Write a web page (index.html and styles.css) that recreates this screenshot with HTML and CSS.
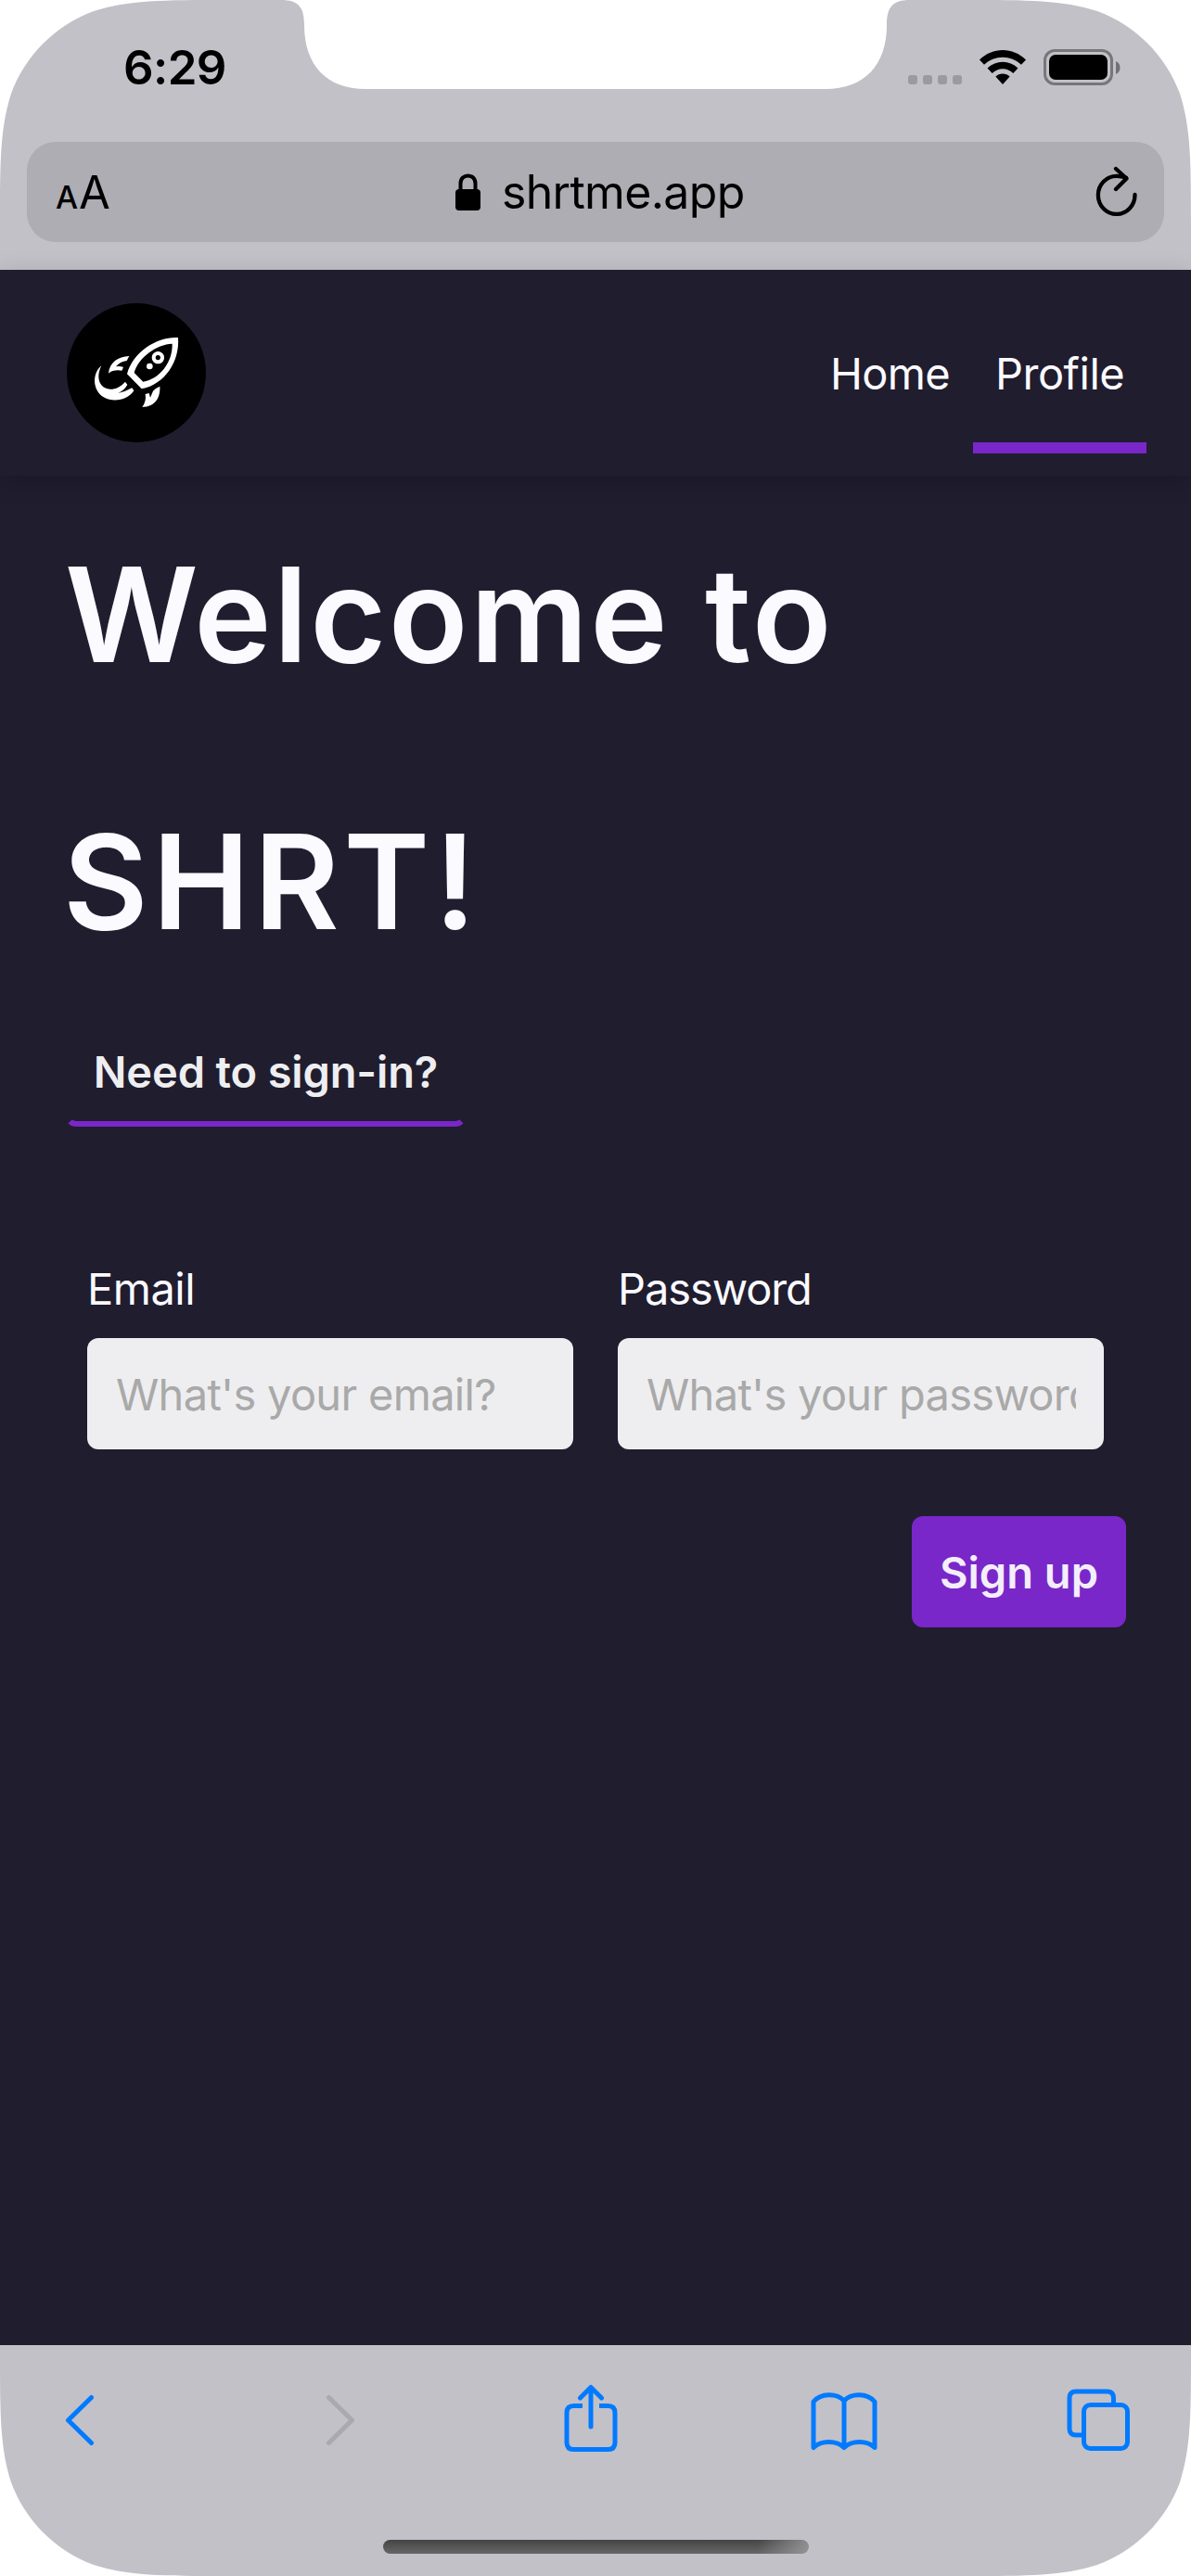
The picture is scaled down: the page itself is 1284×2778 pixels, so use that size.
FILE: index.html
```html
<!DOCTYPE html>
<html lang="en">
<head>
<meta charset="utf-8">
<title>SHRT</title>
<link rel="stylesheet" href="styles.css">
</head>
<body>
<div class="screen">
  <div class="chrome-top">
    <div class="status">
      <span class="time">6:29</span>
      <div class="indicators">
        <div class="dots"><i></i><i></i><i></i><i></i></div>
        <svg class="wifi" width="50" height="38" viewBox="0 0 50 38">
          <path d="M0 10.500C14-3.500 36-3.500 50 10.500L45 15.800C34 5 16 5 5 15.800Z"/>
          <path d="M8.500 19.500C18 10.500 32 10.500 41.500 19.500L36.300 25C30 18.700 20 18.700 13.700 25Z"/>
          <path d="M17.300 28.500C21.500 24.500 28.500 24.500 32.700 28.500L25 37Z"/>
        </svg>
        <div class="battery"><div class="cell"><b></b></div><svg width="5" height="14" viewBox="0 0 5 14"><path d="M0 0Q4.500 2 4.500 7T0 14Z"/></svg></div>
      </div>
    </div>
    <div class="urlbar">
      <div class="reader"><span class="a-small">A</span><span class="a-big">A</span></div>
      <div class="address">
        <svg width="28" height="40" viewBox="0 0 28 40"><rect x="0" y="17" width="27" height="23" rx="4"/><path d="M5.500 18V11C5.500-.5 21.500-.5 21.500 11V18" fill="none" stroke="#000" stroke-width="4"/></svg>
        <span>shrtme.app</span>
      </div>
      <svg class="reload" width="46" height="56" viewBox="0 0 46 56"><path d="M33 12.500Q28 10.900 23 10.900A19.800 20.500 0 1 0 42.500 31M22 3L33.500 13.500L22 25" fill="none" stroke="#000" stroke-width="4.300" stroke-linecap="round" stroke-linejoin="round"/></svg>
    </div>
  </div>

  <div class="page">
    <header class="header">
      <svg class="logo" width="150" height="150" viewBox="96 81 450 450">
        <circle cx="321" cy="306" r="225" fill="#000"/>
        <g fill="#fff" fill-rule="evenodd">
          <path d="M456 192C392 188 310 236 291 310L338 358C412 344 462 270 456 192ZM437 212C386 214 328 256 314 306L343 335C396 326 439 272 437 212Z"/>
          <path d="M391 237a20 20 0 1 0 .1 0ZM391 249a8 8 0 1 1-.1 0Z"/>
          <circle cx="364" cy="285" r="10"/>
          <path d="M298 252C262 253 234 273 231 308Q247 295 274 299L279 288Q267 283 255 286Q268 270 290 267Z"/>
          <path d="M397 350Q382 356 375 365L366 386L362 372L350 375Q354 398 340 417C384 415 399 385 397 350Z"/>
          <path d="M208 283C178 308 178 362 215 385C250 405 295 392 313 364L307 355Q288 366 262 372Q281 364 292 345L285 335C265 358 235 367 214 352C194 335 196 307 208 283Z"/>
        </g>
      </svg>
      <nav class="nav">
        <a class="link home">Home</a>
        <a class="link profile active">Profile</a>
      </nav>
    </header>
    <main class="main">
      <h1 class="title"><span class="greeting">Welcome to</span><br>SHRT!</h1>
      <button class="switch"><span>Need to sign-in?</span></button>
      <form class="form">
        <label class="field"><span class="label email">Email</span><span class="input"><span class="hint">What's your email?</span></span></label>
        <label class="field"><span class="label password">Password</span><span class="input"><span class="hint">What's your password?</span></span></label>
      </form>
      <div class="actions"><button class="submit" type="button"><span>Sign up</span></button></div>
    </main>
  </div>

  <div class="chrome-bottom">
    <div class="toolbar">
      <svg class="back" width="32" height="56" viewBox="0 0 32 56"><path d="M28.500 3.500L3.500 28L28.500 52.500"/></svg>
      <svg class="forward" width="32" height="56" viewBox="0 0 32 56"><path d="M3.500 3.500L28.500 28L3.500 52.500"/></svg>
      <svg class="share" width="58" height="74" viewBox="0 0 58 74"><path d="M20 23.500H10.500Q3 23.500 3 31V63Q3 70.500 10.500 70.500H47.500Q55 70.500 55 63V31Q55 23.500 47.500 23.500H38"/><path d="M29 46V4M17.500 15L29 3.500L40.500 15" stroke-linecap="round"/></svg>
      <svg class="book" width="72" height="64" viewBox="0 0 72 64"><path d="M3 60.500V11C11 1.500 28 1.500 36 10C44 1.500 61 1.500 69 11V60.500C61 52.500 44 52.500 36 60.500C28 52.500 11 52.500 3 60.500ZM36 10V60.500"/></svg>
      <svg class="tabs" width="68" height="68" viewBox="0 0 68 68"><path d="M50.500 17V10Q50.500 3 43.500 3H10Q3 3 3 10V43Q3 50 10 50H17"/><rect x="18.500" y="17.500" width="47" height="47" rx="7"/></svg>
    </div>
    <div class="grabber"></div>
  </div>
</div>
</body>
</html>
```
FILE: styles.css
```css
* { box-sizing: border-box; }

body {
  margin: 0;
  background: #fff;
  font-family: Inter, "Liberation Sans", sans-serif;
}

svg { display: block; flex: none; }

/* Display outline: continuous corners plus the sensor notch */
.screen {
  width: 1284px;
  height: 2778px;
  display: flex;
  flex-direction: column;
  clip-path: path("M0 245C0 174 0 139 12 101C27 60 60 27 101 12C139 0 174 0 245 0H303C322 0 328 8 328 27C328 70 352 96 394 96H890C932 96 956 70 956 27C956 8 962 0 981 0H1039C1110 0 1145 0 1183 12C1224 27 1257 60 1272 101C1284 139 1284 174 1284 245V2533C1284 2604 1284 2639 1272 2677C1257 2718 1224 2751 1183 2766C1145 2778 1110 2778 1039 2778H245C174 2778 139 2778 101 2766C60 2751 27 2718 12 2677C0 2639 0 2604 0 2533Z");
}

.chrome-top {
  height: 291px;
  background: #c2c1c7;
  padding: 0 29px;
}

.status {
  height: 153px;
  padding: 42px 47px 0 104px;
  display: flex;
  justify-content: space-between;
  align-items: flex-start;
}

.time {
  font-size: 51px;
  line-height: 62px;
  font-weight: 600;
  letter-spacing: -.6px;
}

.indicators {
  display: flex;
  align-items: flex-end;
  margin-top: 11px;
}

.dots { display: flex; gap: 6px; margin-right: 19px; padding-bottom: 1px; }
.dots i { width: 10px; height: 10px; border-radius: 3px; background: #9b9aa0; }
.wifi { margin-right: 19px; }
.battery { display: flex; align-items: center; gap: 3px; }
.battery svg { fill: #717075; }

.cell {
  width: 75px;
  height: 39px;
  padding: 3px;
  border: 3px solid #77777b;
  border-radius: 12px;
}

.cell b { display: block; height: 100%; border-radius: 7px; background: #000; }

.urlbar {
  height: 108px;
  padding: 0 28px 0 31px;
  border-radius: 31px;
  background: #aeadb3;
  display: grid;
  grid-template-columns: 431px 1fr 46px;
  align-items: center;
}

.reader { display: flex; align-items: baseline; gap: 1px; }
.a-small { font-size: 34px; font-weight: 500; }
.a-big { font-size: 49px; }

.address {
  display: flex;
  align-items: center;
  gap: 22px;
  font-size: 50px;
  line-height: 60px;
}

.address span { letter-spacing: -.7px; white-space: nowrap; }

.page { flex: 1; background: #201d2f; color: #fbfaff; }

.header {
  height: 222px;
  padding: 36px 48px 0 72px;
  display: flex;
  justify-content: space-between;
  box-shadow: 0 6px 24px rgba(0, 0, 0, .18);
}

.nav { display: flex; height: 162px; }

.link {
  padding: 47px 25px 0 27px;
  font-size: 47px;
  line-height: 58px;
  letter-spacing: -.7px;
  white-space: nowrap;
}

.link.profile { width: 187px; padding-left: 24px; letter-spacing: -.5px; }
.active { border-bottom: 12px solid #7927c8; }

.main { padding: 0 72px; }

.title {
  margin: 0 0 0 -4px;
  padding-top: 6px;
  height: 582px;
  font-size: 141px;
  line-height: 288px;
  font-weight: 600;
  letter-spacing: 4.5px;
}

.greeting { margin-left: 2px; letter-spacing: 2.4px; }

button {
  display: block;
  height: 120px;
  padding: 2px 0 0;
  border-radius: 12px;
  font: 600 47px/58px Inter, "Liberation Sans", sans-serif;
  white-space: nowrap;
}

.switch {
  width: 433px;
  margin-left: -2px;
  border: 6px solid transparent;
  border-bottom-color: #7927c8;
  background: none;
  color: #eeeef0;
  letter-spacing: -.15px;
}

.form {
  display: grid;
  grid-template-columns: 524px 524px;
  column-gap: 48px;
  padding: 146px 22px 0;
}

.label {
  display: block;
  font-size: 47px;
  line-height: 58px;
  margin-bottom: 24px;
}

.email { letter-spacing: -.5px; }
.password { letter-spacing: -1.1px; }

.input {
  display: flex;
  align-items: center;
  height: 120px;
  padding: 1px 30px 0 31px;
  border-radius: 12px;
  background: #eeeef0;
  color: #a9a9a9;
  font-size: 47px;
  letter-spacing: -.7px;
}

.hint { flex: 1; overflow: hidden; white-space: nowrap; line-height: 60px; }

.actions { display: flex; justify-content: flex-end; padding: 72px 0 0; margin-right: -2px; }

.submit {
  width: 231px;
  border: 0;
  background: #7927c8;
  color: #f4eefb;
}

.chrome-bottom {
  height: 249px;
  background: #c2c1c7;
}

.toolbar {
  height: 210px;
  padding: 43px 66px 0 70px;
  display: flex;
  justify-content: space-between;
  align-items: flex-start;
  fill: none;
  stroke: #007aff;
  stroke-width: 5;
  stroke-linejoin: round;
}

.back, .forward { margin-top: 10px; stroke-linecap: round; }
.forward { stroke: #aaa9ae; margin-left: 31px; }
.share { margin-top: -1px; margin-left: 7px; }
.book { margin-top: 7px; margin-left: -10px; }
.tabs { margin-top: 4px; margin-left: -14px; }

.grabber {
  width: 459px;
  height: 15px;
  margin: 0 auto;
  border-radius: 8px;
  background: linear-gradient(90deg, transparent 88%, rgba(160, 160, 163, .8)), linear-gradient(#434444, #676768);
}
```
